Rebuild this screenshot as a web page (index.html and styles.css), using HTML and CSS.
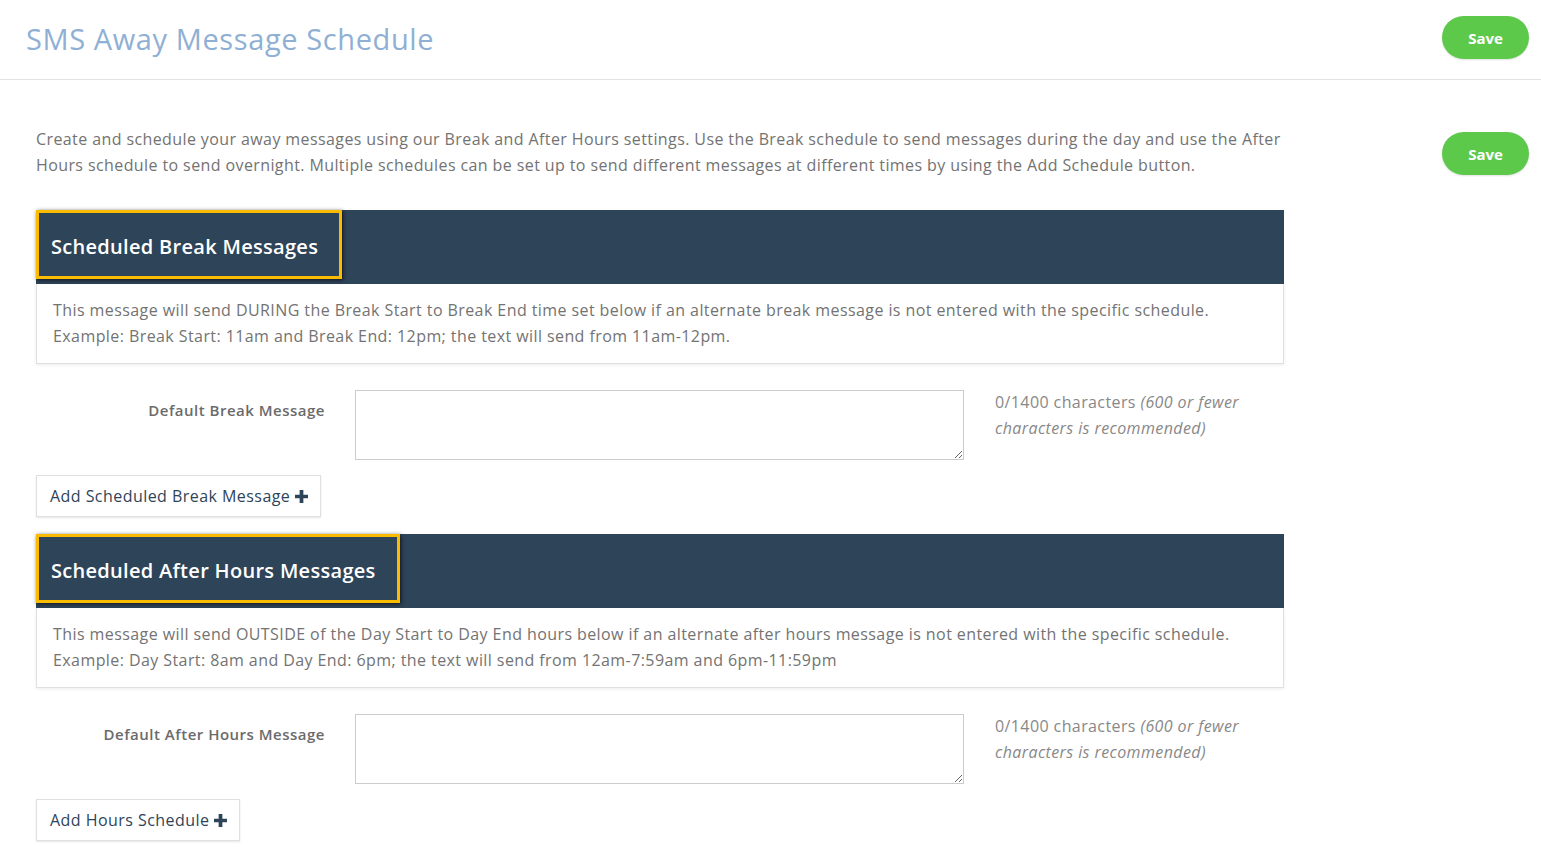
FILE: index.html
```html
<!DOCTYPE html>
<html lang="en">
<head>
    <meta charset="UTF-8">
    <meta name="viewport" content="width=device-width, initial-scale=1.0">
    <title>SMS Away Message Schedule</title>
    <link rel="stylesheet" href="styles.css">
</head>
<body>
    <header class="topbar">
        <h1>SMS Away Message Schedule</h1>
        <button class="btn-save">Save</button>
    </header>

    <main class="content">
        <div class="main-col">
            <p class="intro">Create and schedule your away messages using our Break and After Hours settings. Use the Break schedule to send messages during the day and use the After Hours schedule to send overnight. Multiple schedules can be set up to send different messages at different times by using the Add Schedule button.</p>

            <section class="schedule">
                <div class="panel-head">
                    <h2 class="panel-title">Scheduled Break Messages</h2>
                </div>
                <div class="panel-body">
                    This message will send DURING the Break Start to Break End time set below if an alternate break message is not entered with the specific schedule.<br>
                    Example: Break Start: 11am and Break End: 12pm; the text will send from 11am-12pm.
                </div>
                <div class="form-row">
                    <label for="breakMsg">Default Break Message</label>
                    <textarea id="breakMsg"></textarea>
                    <div class="help">
                        <div>0/1400 characters <em>(600 or fewer</em></div>
                        <div><em>characters is recommended)</em></div>
                    </div>
                </div>
                <button class="btn-add">Add Scheduled Break Message
                    <svg class="plus" viewBox="0 0 14 14"><path d="M5 0h4v5h5v4H9v5H5V9H0V5h5z"/></svg>
                </button>
            </section>

            <section class="schedule">
                <div class="panel-head">
                    <h2 class="panel-title">Scheduled After Hours Messages</h2>
                </div>
                <div class="panel-body">
                    This message will send OUTSIDE of the Day Start to Day End hours below if an alternate after hours message is not entered with the specific schedule.<br>
                    Example: Day Start: 8am and Day End: 6pm; the text will send from 12am-7:59am and 6pm-11:59pm
                </div>
                <div class="form-row">
                    <label for="hoursMsg">Default After Hours Message</label>
                    <textarea id="hoursMsg"></textarea>
                    <div class="help">
                        <div>0/1400 characters <em>(600 or fewer</em></div>
                        <div><em>characters is recommended)</em></div>
                    </div>
                </div>
                <button class="btn-add">Add Hours Schedule
                    <svg class="plus" viewBox="0 0 14 14"><path d="M5 0h4v5h5v4H9v5H5V9H0V5h5z"/></svg>
                </button>
            </section>
        </div>

        <div class="side-col">
            <button class="btn-save">Save</button>
        </div>
    </main>
</body>
</html>
```

FILE: styles.css
```css
body {
    margin: 0;
    font-family: "Open Sans", "Liberation Sans", sans-serif;
    color: #737373;
    background: #fff;
}
.topbar {
    box-sizing: border-box;
    height: 80px;
    border-bottom: 1px solid #e3e3e3;
    display: flex;
    align-items: flex-start;
    justify-content: space-between;
    padding: 16px 12px 0 26px;
}
.topbar h1 {
    margin: 3px 0 0;
    font-size: 29px;
    line-height: 40px;
    font-weight: 500;
    color: #8fb0d4;
    letter-spacing: 0.6px;
}
.btn-save {
    width: 87px;
    height: 43px;
    border: none;
    border-radius: 22px;
    background: #5dc94b;
    color: #fff;
    font-family: inherit;
    font-size: 15px;
    font-weight: 700;
    cursor: pointer;
    box-shadow: 0 1px 2px rgba(0,0,0,0.12);
}
.btn-save:hover {
    background: #4fb83e;
}
.content {
    display: flex;
    justify-content: space-between;
    padding: 0 12px 0 36px;
}
.main-col {
    width: 1248px;
}
.side-col {
    padding-top: 52px;
}
.intro {
    margin: 46px 0 32px;
    font-size: 16px;
    line-height: 26px;
    letter-spacing: 0.4px;
}
.schedule {
    margin-bottom: 17px;
}
.panel-head {
    height: 74px;
    background: #2e4459;
}
.panel-title {
    display: inline-block;
    box-sizing: border-box;
    height: 69px;
    margin: 0;
    padding: 20px 21px 0 12px;
    border: 3px solid #fbbb00;
    box-shadow: 1px 1px 4px rgba(0,0,0,0.7);
    color: #fff;
    font-size: 20px;
    font-weight: 600;
    letter-spacing: 0.3px;
}
.panel-body {
    border: 1px solid #e0e0e0;
    border-top: none;
    box-shadow: 0 1px 3px rgba(0,0,0,0.08);
    padding: 13px 16px 14px;
    font-size: 16px;
    line-height: 26px;
    letter-spacing: 0.42px;
}
.form-row {
    display: grid;
    grid-template-columns: 289px 608px 1fr;
    column-gap: 31px;
    margin-top: 26px;
}
.form-row label {
    text-align: right;
    padding-top: 10px;
    font-size: 15px;
    font-weight: 600;
    color: #6b6b6b;
    letter-spacing: 0.5px;
}
.form-row textarea {
    box-sizing: border-box;
    height: 70px;
    border: 1px solid #ccc;
    margin: 0 0 0 -1px;
}
.help {
    font-size: 16px;
    line-height: 26px;
    color: #888;
    letter-spacing: 0.4px;
    margin-top: -1px;
}
.btn-add {
    display: inline-flex;
    align-items: center;
    gap: 5px;
    height: 42px;
    margin-top: 15px;
    padding: 0 12px 0 13px;
    background: #fff;
    border: 1px solid #e0e0e0;
    box-shadow: 0 1px 2px rgba(0,0,0,0.1);
    font-family: inherit;
    font-size: 16px;
    color: #2e4459;
    letter-spacing: 0.45px;
    cursor: pointer;
}
.plus {
    width: 13px;
    height: 13px;
    fill: #2e4459;
}
```
